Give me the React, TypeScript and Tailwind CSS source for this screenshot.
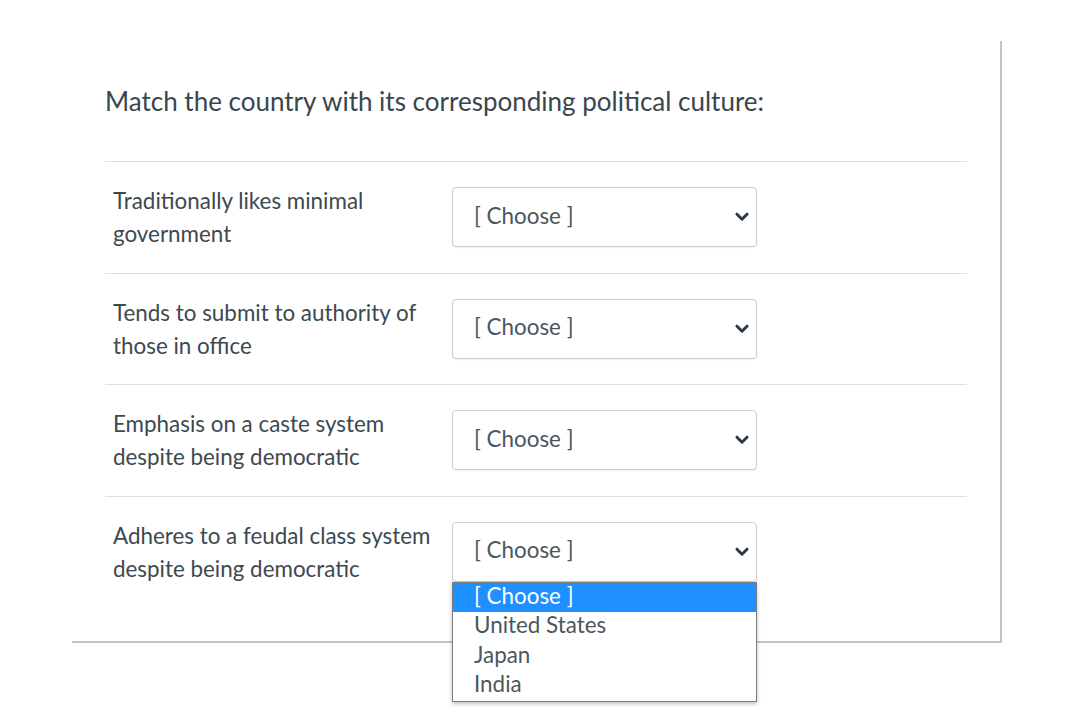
import React from "react";

const rows = [
    "Traditionally likes minimal government",
    "Tends to submit to authority of those in office",
    "Emphasis on a caste system despite being democratic",
    "Adheres to a feudal class system despite being democratic",
];

const options = ["[ Choose ]", "United States", "Japan", "India"];

function Chevron() {
    return (
        <svg width="14" height="10" viewBox="0 0 14 10" fill="none" className="text-[#2d3b45]">
            <path d="M2 2.2 L7 7.2 L12 2.2" stroke="currentColor" strokeWidth="3" strokeLinecap="round" strokeLinejoin="round" />
        </svg>
    );
}

function SelectBox({ open }: { open?: boolean }) {
    return (
        <div className="relative w-[305px]">
            <div className="flex h-[60px] items-center justify-between rounded-[4px] border border-[#c7cdd1] bg-white pl-[21px] pr-[7px] shadow-[0_1px_2px_rgba(0,0,0,0.06)]">
                <span className="-mt-[3px] text-[22.4px] text-[#4b575e]">[ Choose ]</span>
                <Chevron />
            </div>

            {/* open option list */}
            {open && (
                <div className="absolute left-0 top-[60px] z-10 w-[305px] border border-[#7c7c7c] bg-white shadow-[0_2px_4px_rgba(0,0,0,0.25)]">
                    {options.map((opt, i) => (
                        <div
                            key={opt}
                            className={`flex h-[29.5px] items-center pl-[21px] pb-[3px] text-[22.4px] leading-none ${i === 0 ? "bg-[#1e90ff] text-white" : "text-[#4b575e]"}`}
                        >
                            {opt}
                        </div>
                    ))}
                </div>
            )}
        </div>
    );
}

export default function App() {
    return (
        <div className="h-[722px] w-[1080px] bg-white pt-[41px] font-['Lato','Liberation_Sans',sans-serif] text-[#2d3b45]">
            <div className="ml-[72px] w-[930px] border-b-2 border-r-2 border-[#c4c4c4] px-[33px] pb-[34px] pt-[42px]">
                <h1 className="text-[26px] leading-[36px] text-[#3a464e]">
                    Match the country with its corresponding political culture:
                </h1>

                <div className="mt-[42px]">
                    {rows.map((label, i) => (
                        <div
                            key={label}
                            className="flex h-[111.5px] items-center border-t border-[#dcdedf]"
                        >
                            <div className="w-[347px] pl-[8px] pr-[14px] text-[22.4px] leading-[33px] text-[#3d4950]">
                                {label}
                            </div>
                            <SelectBox open={i === rows.length - 1} />
                        </div>
                    ))}
                </div>
            </div>
        </div>
    );
}
